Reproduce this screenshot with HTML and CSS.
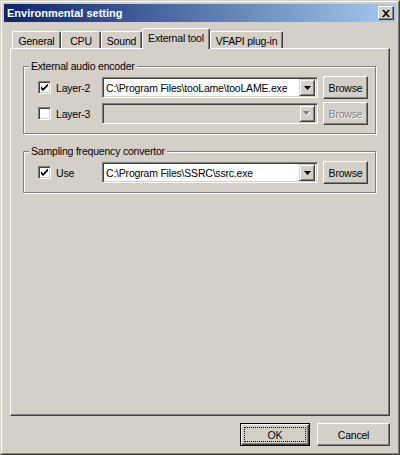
FILE: index.html
```html
<!DOCTYPE html>
<html>
<head>
<meta charset="utf-8">
<link rel="stylesheet" href="styles.css">
</head>
<body>
<div class="window">
  <div class="frame">
    <div class="titlebar">
      <span class="title">Environmental setting</span>
      <div class="close">
        <svg width="8" height="7" viewBox="0 0 8 7"><path d="M0 0h2l2 2.2L6 0h2L5 3.5 8 7H6L4 4.8 2 7H0l3-3.5z" fill="#000"/></svg>
      </div>
    </div>
    <div class="body">
      <div class="tabs">
        <div class="tab t-general">General</div>
        <div class="tab t-cpu">CPU</div>
        <div class="tab t-sound">Sound</div>
        <div class="tab sel t-ext">External tool</div>
        <div class="tab t-vfapi">VFAPI plug-in</div>
      </div>
      <div class="panel">
        <div class="group">
          <div class="legend">External audio encoder</div>
          <div class="rows">
            <div class="row">
              <div class="chk">
                <span class="box"><svg width="7" height="7" viewBox="0 0 7 7"><path d="M0 2v3l2 2 5-5V-0.5L2 4.5z" fill="#000"/></svg></span>
                <span>Layer-2</span>
              </div>
              <div class="combo">
                <span class="val">C:\Program Files\tooLame\tooLAME.exe</span>
                <span class="drop"><svg width="7" height="4" viewBox="0 0 7 4"><path d="M0 0h7L3.5 4z" fill="#000"/></svg></span>
              </div>
              <div class="btn">Browse</div>
            </div>
            <div class="row">
              <div class="chk">
                <span class="box"></span>
                <span>Layer-3</span>
              </div>
              <div class="combo disabled">
                <span class="val"></span>
                <span class="drop"><svg width="8" height="5" viewBox="0 0 8 5"><path d="M1 1h7L4.5 5z" fill="#fff"/><path d="M0 0h7L3.5 4z" fill="#808080"/></svg></span>
              </div>
              <div class="btn disabled">Browse</div>
            </div>
          </div>
        </div>
        <div class="group">
          <div class="legend">Sampling frequency convertor</div>
          <div class="rows">
            <div class="row">
              <div class="chk">
                <span class="box"><svg width="7" height="7" viewBox="0 0 7 7"><path d="M0 2v3l2 2 5-5V-0.5L2 4.5z" fill="#000"/></svg></span>
                <span>Use</span>
              </div>
              <div class="combo">
                <span class="val">C:\Program Files\SSRC\ssrc.exe</span>
                <span class="drop"><svg width="7" height="4" viewBox="0 0 7 4"><path d="M0 0h7L3.5 4z" fill="#000"/></svg></span>
              </div>
              <div class="btn">Browse</div>
            </div>
          </div>
        </div>
      </div>
      <div class="buttons">
        <div class="btn ok"><span class="focus">OK</span></div>
        <div class="btn cancel">Cancel</div>
      </div>
    </div>
  </div>
</div>
</body>
</html>
```
FILE: styles.css
```css
html, body {
  margin: 0;
  padding: 0;
  background: #d4d0c8;
}
body {
  font-family: "Liberation Sans", Arial, sans-serif;
  font-size: 10.5px;
  letter-spacing: -0.2px;
  color: #000;
}
.window {
  width: 400px;
  height: 455px;
  box-sizing: border-box;
  border: 1px solid;
  border-color: #d4d0c8 #404040 #404040 #d4d0c8;
  background: #d4d0c8;
}
.frame {
  height: 100%;
  box-sizing: border-box;
  border: 1px solid;
  border-color: #fff #808080 #808080 #fff;
  padding: 2px;
  display: flex;
  flex-direction: column;
}
.titlebar {
  height: 18px;
  flex: none;
  background: linear-gradient(to right, #0a246a, #a6caf0);
  display: flex;
  align-items: center;
  padding: 0 2px 0 2px;
}
.title {
  flex: 1;
  color: #fff;
  font-weight: bold;
  font-size: 11px;
  letter-spacing: 0;
  padding-left: 1px;
}
.close {
  width: 16px;
  height: 14px;
  box-sizing: border-box;
  background: #d4d0c8;
  border: 1px solid;
  border-color: #fff #404040 #404040 #fff;
  box-shadow: inset -1px -1px #808080;
  display: flex;
  align-items: center;
  justify-content: center;
}
.body {
  flex: 1;
  display: flex;
  flex-direction: column;
  padding: 6px 6px 5px 6px;
}
.tabs {
  height: 20px;
  display: flex;
  align-items: flex-end;
  padding-left: 2px;
  position: relative;
  z-index: 1;
}
.tab {
  height: 17px;
  box-sizing: border-box;
  border: 1px solid;
  border-color: #fff #404040 transparent #fff;
  border-bottom: none;
  border-radius: 2px 2px 0 0;
  box-shadow: inset -1px 0 #808080;
  background: #d4d0c8;
  display: flex;
  align-items: center;
  justify-content: center;
  padding-top: 1px;
}
.tab.sel {
  height: 21px;
  margin-bottom: -1px;
  padding-top: 0;
  padding-bottom: 2px;
}
.t-general { width: 49px; }
.t-cpu { width: 40px; }
.t-sound { width: 41px; }
.t-ext { width: 68px; }
.t-vfapi { width: 73px; }
.panel {
  height: 368px;
  flex: none;
  box-sizing: border-box;
  border: 1px solid;
  border-color: #fff #404040 #404040 #fff;
  box-shadow: inset -1px -1px #808080;
  padding: 0 13px 0 12px;
}
.group {
  margin-top: 17px;
  border: 1px solid #808080;
  box-shadow: inset 1px 1px #fff, 1px 1px #fff;
  display: flex;
  flex-direction: column;
  padding-bottom: 8px;
}
.legend {
  align-self: flex-start;
  height: 13px;
  line-height: 13px;
  margin: -7px 0 0 5px;
  padding: 0 2px;
  background: #d4d0c8;
}
.rows {
  display: flex;
  flex-direction: column;
  gap: 3px;
  margin-top: 3px;
  padding-left: 14px;
}
.row {
  height: 23px;
  display: flex;
  align-items: center;
}
.chk {
  width: 64px;
  display: flex;
  align-items: center;
  gap: 5px;
}
.box {
  width: 13px;
  height: 13px;
  box-sizing: border-box;
  border: 1px solid;
  border-color: #808080 #fff #fff #808080;
  box-shadow: inset 1px 1px #404040, inset -1px -1px #d4d0c8;
  background: #fff;
  display: flex;
  align-items: center;
  justify-content: center;
}
.combo {
  width: 216px;
  height: 21px;
  box-sizing: border-box;
  border: 1px solid;
  border-color: #808080 #fff #fff #808080;
  box-shadow: inset 1px 1px #404040, inset -1px -1px #d4d0c8;
  background: #fff;
  padding: 2px;
  display: flex;
  align-items: center;
}
.combo.disabled {
  background: #d4d0c8;
}
.val {
  flex: 1;
  padding-left: 1px;
  white-space: nowrap;
  overflow: hidden;
}
.drop {
  width: 16px;
  height: 17px;
  box-sizing: border-box;
  border: 1px solid;
  border-color: #d4d0c8 #404040 #404040 #d4d0c8;
  box-shadow: inset 1px 1px #fff, inset -1px -1px #808080;
  background: #d4d0c8;
  display: flex;
  align-items: center;
  justify-content: center;
}
.btn {
  margin-left: 5px;
  width: 45px;
  height: 23px;
  box-sizing: border-box;
  border: 1px solid;
  border-color: #fff #404040 #404040 #fff;
  box-shadow: inset -1px -1px #808080;
  background: #d4d0c8;
  display: flex;
  align-items: center;
  justify-content: center;
}
.btn.disabled {
  color: #808080;
  text-shadow: 1px 1px #fff;
}
.buttons {
  margin-top: 7px;
  display: flex;
  justify-content: flex-end;
  gap: 7px;
}
.buttons .btn {
  margin-left: 0;
}
.ok {
  width: 70px;
  border: 1px solid #000;
  box-shadow: inset 1px 1px #fff, inset -1px -1px #404040, inset -2px -2px #808080;
  padding: 3px;
  align-items: stretch;
}
.focus {
  flex: 1;
  border: 1px dotted #000;
  display: flex;
  align-items: center;
  justify-content: center;
}
.cancel {
  width: 73px;
}
```
